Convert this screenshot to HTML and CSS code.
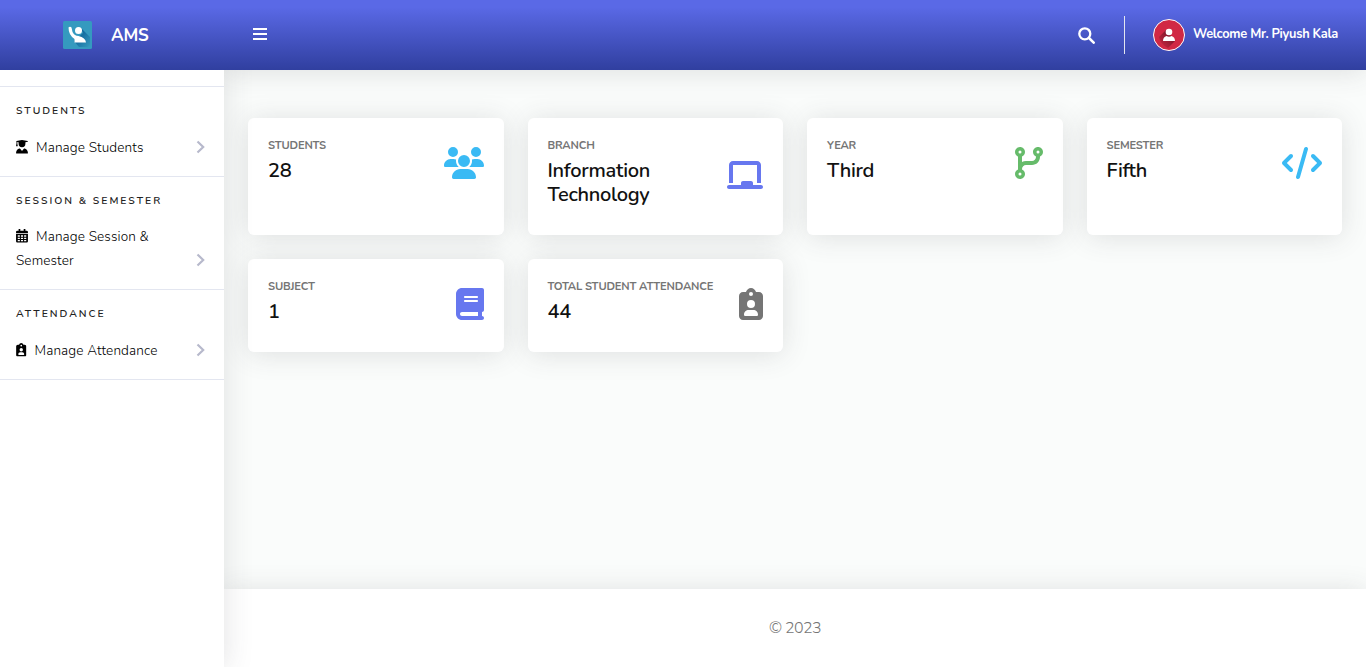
FILE: index.html
```html
<!DOCTYPE html>
<html lang="en">
<head>
<meta charset="utf-8">
<title>AMS Dashboard</title>
<link rel="stylesheet" href="styles.css">
</head>
<body>
<svg class="defs" aria-hidden="true">
  <symbol id="badge" viewBox="0 0 384 512"><path fill-rule="evenodd" d="M64 64h47.500C123 27 154 0 192 0s69 27 80.500 64H320c35.300 0 64 28.700 64 64v320c0 35.300-28.700 64-64 64H64c-35.300 0-64-28.700-64-64V128c0-35.300 28.700-64 64-64zM192 64a32 32 0 1 0 0 64 32 32 0 1 0 0-64zM192 192a64 64 0 1 0 0 128 64 64 0 1 0 0-128zM154 352c-41 0-74 33-74 74 0 12 10 22 22 22h180c12 0 22-10 22-22 0-41-33-74-74-74z"/></symbol>
  <symbol id="chevron" viewBox="0 0 9 14"><path d="M1.500 1.500 7.200 7 1.500 12.500" fill="none" stroke="currentColor" stroke-width="2.200"/></symbol>
</svg>
<div class="wrapper">
  <aside class="sidebar">
    <a class="brand">
      <svg class="logo" viewBox="0 0 30 28">
        <defs><linearGradient id="logo-shade" x1="0" y1="0" x2="1" y2="1"><stop offset=".3" stop-color="#0f649a"/><stop offset="1" stop-color="#359abf"/></linearGradient></defs>
        <rect width="29" height="28" rx="1.500" fill="#359abf"/>
        <path d="m18 7 9 9v8l-2 2h-9l-5-6 9-8z" fill="url(#logo-shade)"/>
        <circle cx="15.500" cy="9.500" r="3.500" fill="#fff"/>
        <path d="M5.500 6.500q1.500-1.300 3 0l1 4.500q2 4 6 4 7 1.500 7.500 6.500H11.500V18Q5.500 14 5.500 6.500z" fill="#fff"/>
      </svg>
      <span>AMS</span>
    </a>
    <nav class="menu">
      <section class="group">
        <h6 class="heading">Students</h6>
        <a class="link">
          <span class="link-text"><svg class="mini" viewBox="0 0 448 512"><path d="M219 2q5-2 10 0l208 40c15 3 15 23 0 26l-85 17v59a128 128 0 0 1-256 0V85L48 76v57l16 90c2 9-5 17-16 17H16c-10 0-18-8-16-18l16-89V68C5 64 4 45 17 42zM129 323c10-3 20 1 26 9l53 67c8 10 24 10 32 0l53-67c6-8 16-12 26-9 75 20 129 87 129 166 0 13-10 23-23 23H23c-13 0-23-10-23-23 0-79 54-146 129-166z"/></svg>Manage Students</span>
          <svg class="chevron"><use href="#chevron"/></svg>
        </a>
      </section>
      <section class="group">
        <h6 class="heading">Session &amp; Semester</h6>
        <a class="link two">
          <span class="link-text"><svg class="mini" viewBox="0 0 448 512"><path fill-rule="evenodd" d="M96 0h64v64h128V0h64v64h48q48 0 48 48v48H0v-48q0-48 48-48h48zM0 192h448v272q0 48-48 48H48q-48 0-48-48zM64 240v48h80v-48zM184 240v48h80v-48zM304 240v48h80v-48zM64 328v48h80v-48zM184 328v48h80v-48zM304 328v48h80v-48zM64 416v48h80v-48zM184 416v48h80v-48zM304 416v48h80v-48z"/></svg>Manage Session &amp;<br>Semester</span>
          <svg class="chevron"><use href="#chevron"/></svg>
        </a>
      </section>
      <section class="group">
        <h6 class="heading">Attendance</h6>
        <a class="link">
          <span class="link-text"><svg class="mini narrow"><use href="#badge"/></svg>Manage Attendance</span>
          <svg class="chevron"><use href="#chevron"/></svg>
        </a>
      </section>
    </nav>
  </aside>
  <div class="content">
    <header class="topbar">
      <svg class="bars" viewBox="0 0 14 12"><path fill="#fff" d="M0 0h14v2H0zM0 5h14v2H0zM0 10h14v2H0z"/></svg>
      <svg class="search" viewBox="0 0 17 17"><circle cx="6.800" cy="6.800" r="5.500" fill="none" stroke="#fff" stroke-width="2.300"/><path d="m11 11 4.700 4.700" stroke="#fff" stroke-width="2.500" stroke-linecap="round"/></svg>
      <span class="divider"></span>
      <svg class="avatar" viewBox="0 0 32 32">
        <defs><linearGradient id="avatar-shade" x1="1" y1="0" x2="0" y2="1"><stop offset=".3" stop-color="#82182c"/><stop offset="1" stop-color="#d12844"/></linearGradient></defs>
        <circle cx="16" cy="16" r="15.500" fill="#d12844" stroke="#fff"/>
        <path d="m13 11-7 7q1 7 9 11l7-7z" fill="url(#avatar-shade)"/>
        <circle cx="16" cy="13" r="3.300" fill="#fff"/>
        <path d="M10 22q0-4 3.500-5 2.500 1.500 5 0 3.500 1 3.500 5z" fill="#fff"/>
      </svg>
      <span class="welcome">Welcome Mr. Piyush Kala</span>
    </header>
    <main class="cards">
      <article class="card"><div class="card-row">
        <div><div class="label">Students</div><div class="value">28</div></div>
        <svg class="icon sky w40" viewBox="0 0 640 512"><path d="M144 0a80 80 0 1 1 0 160A80 80 0 1 1 144 0zM512 0a80 80 0 1 1 0 160A80 80 0 1 1 512 0zM0 298.700C0 239.800 47.800 192 106.700 192h42.700c15.900 0 31 3.500 44.600 9.700c-1.300 7.200-1.900 14.700-1.900 22.300c0 38.200 16.800 72.500 43.300 96H21.300C9.600 320 0 310.400 0 298.700zM405.300 320c26.600-23.500 43.300-57.800 43.300-96c0-7.600-.7-15-1.900-22.300c13.600-6.300 28.700-9.700 44.600-9.700h42.700C592.200 192 640 239.800 640 298.700c0 11.800-9.600 21.300-21.300 21.300H405.300zM224 224a96 96 0 1 1 192 0 96 96 0 1 1 -192 0zM128 485.300C128 411.700 187.700 352 261.300 352H378.700C452.300 352 512 411.700 512 485.300c0 14.700-11.900 26.700-26.700 26.700H154.700c-14.700 0-26.700-11.900-26.700-26.700z"/></svg>
      </div></article>
      <article class="card"><div class="card-row">
        <div><div class="label">Branch</div><div class="value">Information<br>Technology</div></div>
        <svg class="icon indigo w36" viewBox="0 0 576 512"><path d="M96 32C60.700 32 32 60.700 32 96V384H96V96H480V384h64V96c0-35.300-28.700-64-64-64H96zM224 384v32H32c-17.700 0-32 14.300-32 32s14.300 32 32 32H544c17.700 0 32-14.300 32-32s-14.300-32-32-32H416V384c0-17.700-14.300-32-32-32H256c-17.700 0-32 14.300-32 32z"/></svg>
      </div></article>
      <article class="card"><div class="card-row">
        <div><div class="label">Year</div><div class="value">Third</div></div>
        <svg class="icon green w28" viewBox="0 0 448 512"><path fill-rule="evenodd" d="M80 104a24 24 0 1 0 0-48 24 24 0 1 0 0 48zm80-24c0 32.800-19.700 61-48 73.300v87.800c18.800-10.900 40.700-17.100 64-17.100h96c35.300 0 64-28.700 64-64v-6.700C307.700 141 288 112.800 288 80c0-44.200 35.800-80 80-80s80 35.800 80 80c0 32.800-19.700 61-48 73.300V160c0 70.700-57.300 128-128 128H176c-35.300 0-64 28.700-64 64v6.700c28.300 12.300 48 40.500 48 73.300c0 44.200-35.800 80-80 80s-80-35.800-80-80c0-32.800 19.700-61 48-73.300V153.300C19.700 141 0 112.800 0 80C0 35.800 35.800 0 80 0s80 35.800 80 80zm232 0a24 24 0 1 0 -48 0 24 24 0 1 0 48 0zM80 456a24 24 0 1 0 0-48 24 24 0 1 0 0 48z"/></svg>
      </div></article>
      <article class="card"><div class="card-row">
        <div><div class="label">Semester</div><div class="value">Fifth</div></div>
        <svg class="icon sky w40" viewBox="0 0 640 512"><path d="M392.800 1.200c-17-4.900-34.700 5-39.600 22l-128 448c-4.900 17 5 34.700 22 39.600s34.700-5 39.600-22l128-448c4.900-17-5-34.700-22-39.600zm80.600 120.100c-12.500 12.500-12.500 32.800 0 45.300L562.700 256l-89.400 89.400c-12.500 12.500-12.500 32.800 0 45.300s32.800 12.500 45.300 0l112-112c12.500-12.500 12.500-32.800 0-45.300l-112-112c-12.500-12.500-32.800-12.500-45.300 0zm-306.700 0c-12.500-12.500-32.800-12.500-45.300 0l-112 112c-12.500 12.500-12.500 32.800 0 45.300l112 112c12.500 12.500 32.800 12.500 45.300 0s12.500-32.800 0-45.300L77.300 256l89.400-89.400c12.500-12.500 12.500-32.800 0-45.300z"/></svg>
      </div></article>
      <article class="card"><div class="card-row">
        <div><div class="label">Subject</div><div class="value">1</div></div>
        <svg class="icon indigo w28" viewBox="0 0 448 512"><path fill-rule="evenodd" d="M96 0C43 0 0 43 0 96V416c0 53 43 96 96 96H416c17.700 0 32-14.300 32-32s-14.300-32-32-32V384c17.700 0 32-14.300 32-32V32c0-17.700-14.300-32-32-32H96zm0 384H352v64H96c-17.700 0-32-14.300-32-32s14.300-32 32-32zm32-240c0-8.800 7.200-16 16-16H336c8.800 0 16 7.200 16 16s-7.200 16-16 16H144c-8.800 0-16-7.200-16-16zm16 48H336c8.800 0 16 7.200 16 16s-7.200 16-16 16H144c-8.800 0-16-7.200-16-16s7.200-16 16-16z"/></svg>
      </div></article>
      <article class="card"><div class="card-row">
        <div><div class="label">Total Student Attendance</div><div class="value">44</div></div>
        <svg class="icon gray w24"><use href="#badge"/></svg>
      </div></article>
    </main>
    <footer class="footer"><span class="copy">© 2023</span></footer>
  </div>
</div>
</body>
</html>
```
FILE: styles.css
```css
* { box-sizing: border-box; }
body { margin: 0; font-family: Nunito, Lato, "Open Sans", sans-serif; font-size: 16px; line-height: 1.5; color: #757575; background: #fff; }
.defs { position: absolute; width: 0; height: 0; }
svg { display: block; flex: none; fill: currentColor; }
.wrapper { display: flex; height: 667px; overflow: hidden; }
.sidebar { width: 224px; flex: none; background: #fff; position: relative; z-index: 1; box-shadow: 0 2px 28px rgba(58, 59, 69, .15); }
.brand, .topbar { height: 70px; display: flex; align-items: center; background: linear-gradient(#5a69e6 10%, #303f9f); color: #fff; }
.brand { padding-left: 63px; font-weight: 700; font-size: 17px; }
.brand span { margin: 1px 0 0 18px; letter-spacing: -.2px; }
.logo { width: 30px; height: 28px; }
.menu { padding-top: 16px; }
.group { border-top: 1px solid #e3e6f0; }
.group:last-child { border-bottom: 1px solid #e3e6f0; }
.heading { margin: 0; padding: 16px 16px 0; font-size: 10.4px; line-height: 16px; font-weight: 600; text-transform: uppercase; color: #212121; letter-spacing: 2px; white-space: nowrap; }
.link { display: flex; justify-content: space-between; align-items: flex-end; padding: 17px 19px 16px 16px; color: #000; font-size: 13.6px; font-weight: 300; line-height: 24px; letter-spacing: .12px; white-space: nowrap; }
.link.two { padding-top: 16px; }
.mini { display: inline-block; width: 12px; height: 13.6px; margin-right: 8px; vertical-align: -2px; color: #000; }
.mini.narrow { width: 10.5px; }
.chevron { width: 9px; height: 14px; margin-bottom: 6px; color: #b7b9cc; }
.content { flex: 1; display: flex; flex-direction: column; background: #fafcfb; }
/* the bar paints above the sidebar's shadow, its own shadow stays off the sidebar */
.topbar { flex: none; padding: 0 28px; position: relative; z-index: 2; clip-path: inset(0 0 -60px 0); box-shadow: 0 2px 28px rgba(58, 59, 69, .15); }
.bars { width: 14px; height: 12px; margin: 0 auto 2px 1px; }
.search { width: 17px; height: 17px; margin-right: 29px; }
.divider { width: 1px; height: 38px; background: #e3e6f0; margin-right: 28px; }
.avatar { width: 32px; height: 32px; margin-right: 8px; }
.welcome { width: 145px; font-size: 12.8px; font-weight: 700; letter-spacing: -.27px; white-space: nowrap; }
.cards { flex: 1; display: grid; grid-template-columns: repeat(4, 1fr); grid-template-rows: 117px 93px; gap: 24px; padding: 48px 24px; }
.card { background: #fff; border-radius: 6px; padding: 20px; box-shadow: 0 2px 28px rgba(58, 59, 69, .15); }
.card-row { display: flex; justify-content: space-between; align-items: center; }
.label { font-size: 11.2px; line-height: 14px; font-weight: 700; letter-spacing: -.18px; text-transform: uppercase; margin: 1px 0 6px; white-space: nowrap; }
.value { font-size: 20px; line-height: 24px; font-weight: 600; color: #111; letter-spacing: -.27px; margin-bottom: 8px; white-space: nowrap; }
.icon { height: 32px; margin-bottom: 3px; }
.w40 { width: 40px; } .w36 { width: 36px; } .w28 { width: 28px; } .w24 { width: 24px; }
.sky { color: #3abaf4; } .indigo { color: #6777ef; } .green { color: #66bb6a; } .gray { color: #757575; }
.footer { height: 78px; flex: none; display: flex; align-items: center; justify-content: center; background: #fff; box-shadow: 0 2px 28px rgba(58, 59, 69, .15); }
.copy { font-weight: 300; letter-spacing: -.6px; }
```
